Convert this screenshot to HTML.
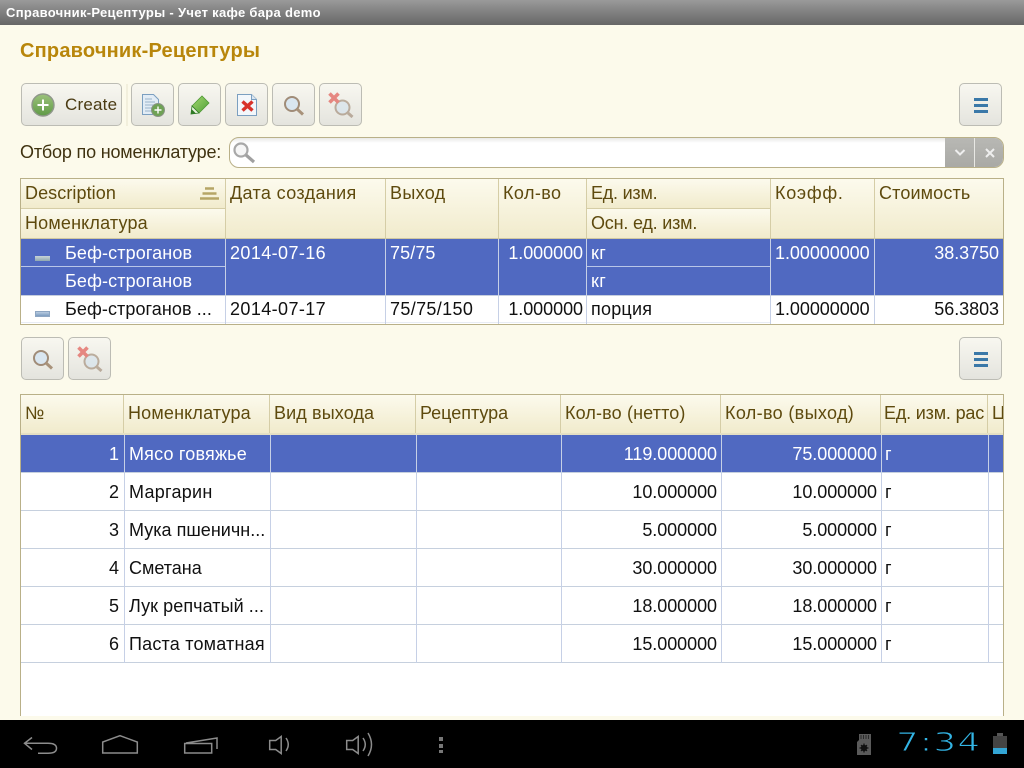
<!DOCTYPE html>
<html><head><meta charset="utf-8">
<style>
html,body{margin:0;padding:0;width:1024px;height:768px;overflow:hidden;background:#fcfaeb;font-family:"Liberation Sans",sans-serif}
div,span,svg{position:absolute;box-sizing:border-box}
.t{white-space:nowrap;font-size:18px;line-height:20px;letter-spacing:.12px;transform:translateY(-1px)}
.n{letter-spacing:-.05px}
.h{color:#5e4a0e}.w{color:#fff}.k{color:#111}
.r{text-align:right}
.hd{background:linear-gradient(#fcfaed,#f1ebcc)}
.v{width:1px}
.btn{width:43px;height:43px;border:1px solid #bcbcb4;border-radius:5px;background:linear-gradient(#f8f7f0,#e4e4de)}
</style></head><body>

<div style="left:0;top:0;width:1024px;height:25px;background:linear-gradient(#9a9a9a,#666)"></div>
<div class="t" style="left:6px;top:3px;color:#fff;font-weight:bold;font-size:13px;letter-spacing:.3px;transform:none">Справочник-Рецептуры - Учет кафе бара demo</div>
<div class="t" style="left:20px;top:39px;color:#b8860b;font-weight:bold;font-size:20px;line-height:24px;letter-spacing:.2px;transform:none">Справочник-Рецептуры</div>

<!-- toolbar -->
<div class="btn" style="left:21px;top:83px;width:101px"></div>
<div style="left:126px;top:84px;width:2px;height:42px;background:#f2efdc"></div>
<svg style="left:31px;top:93px" width="24" height="24" viewBox="0 0 24 24"><defs><linearGradient id="g1" x1="0" y1="0" x2="0" y2="1"><stop offset="0" stop-color="#9cc27c"/><stop offset="1" stop-color="#5f9a45"/></linearGradient><linearGradient id="g2" x1="0" y1="0" x2="1" y2="1"><stop offset="0" stop-color="#a4d86e"/><stop offset="1" stop-color="#4f9f38"/></linearGradient></defs><circle cx="12" cy="12" r="11" fill="url(#g1)" stroke="#8f978a" stroke-width="1.400"/><path d="M12 6.500v11M6.500 12h11" stroke="#fff" stroke-width="2"/></svg>
<div class="t" style="left:65px;top:95px;font-size:17px;color:#4a3a12;letter-spacing:.2px;transform:none">Create</div>
<div class="btn" style="left:131px;top:83px"></div>
<svg style="left:141px;top:93px" width="26" height="26" viewBox="0 0 26 26"><path d="M1.500 1.500h11l5 5v15h-16z" fill="#e2ecf5" stroke="#7b9fc0"/><path d="M4 6h7M4 9h10M4 12h10M4 15h8M4 18h7" stroke="#9bb5cc"/><circle cx="17" cy="17" r="6.500" fill="#6fa255" stroke="#8a9486"/><path d="M17 13.500v7M13.500 17h7" stroke="#fff" stroke-width="1.400"/></svg>
<div class="btn" style="left:178px;top:83px"></div>
<svg style="left:190px;top:95px" width="20" height="20" viewBox="0 0 20 20"><path d="M2 11L12 1l7 7L9 18z" fill="url(#g2)" stroke="#4f9a35" stroke-width=".8"/><path d="M1 19l1-8 7 7z" fill="#e8f2dc" stroke="#2f7a25" stroke-width=".8"/><path d="M1 19l.5-5 4.500 4.500z" fill="#2f7a25"/></svg>
<div class="btn" style="left:225px;top:83px"></div>
<svg style="left:236px;top:93px" width="22" height="24" viewBox="0 0 22 24"><path d="M1.500 1.500h14l5 5v16h-19z" fill="#f3f7fb" stroke="#7b9fc0"/><path d="M15.500 1.500v5h5" fill="#dbe6f0" stroke="#7b9fc0"/><path d="M6.500 8.500l10 9M16.500 8.500l-10 9" stroke="#d8322a" stroke-width="3.400"/></svg>
<div class="btn" style="left:272px;top:83px"></div>
<svg style="left:282px;top:93px" width="24" height="24" viewBox="0 0 24 24"><circle cx="10" cy="11" r="7" fill="#d9e6f0" stroke="#a08c78" stroke-width="2"/><path d="M15 16l6 5.500" stroke="#a8927a" stroke-width="3"/></svg>
<div class="btn" style="left:319px;top:83px"></div>
<svg style="left:328px;top:92px" width="26" height="26" viewBox="0 0 26 26" opacity=".65"><circle cx="14.500" cy="15.500" r="7" fill="#d5e3ee" stroke="#a08a76" stroke-width="2"/><path d="M20 21l4.500 4" stroke="#a08a76" stroke-width="3"/><path d="M1.500 1.500l9 9M10.500 1.500l-9 9" stroke="#e0504a" stroke-width="3.600"/></svg>
<div class="btn" style="left:959px;top:83px"></div>
<div style="left:974px;top:98px;width:14px;height:3px;background:#3a78a8"></div>
<div style="left:974px;top:104px;width:14px;height:3px;background:#3a78a8"></div>
<div style="left:974px;top:110px;width:14px;height:3px;background:#3a78a8"></div>

<!-- filter -->
<div class="t" style="left:20px;top:143px;color:#3f3210;letter-spacing:-.18px">Отбор по номенклатуре:</div>
<div style="left:229px;top:137px;width:775px;height:31px;border:1px solid #b9b088;border-radius:10px;background:linear-gradient(#e9e9e6 0,#fff 5px);overflow:hidden">
<div style="left:715px;top:0;width:59px;height:29px;background:linear-gradient(#b8b8b4,#a9a9a5)"></div>
<div style="left:744px;top:0;width:1px;height:29px;background:#e8e8e4"></div>
<svg style="left:722px;top:9px" width="16" height="12" viewBox="0 0 16 12"><path d="M3.500 3l4.500 4.500L12.500 3" fill="none" stroke="#eee" stroke-width="2"/></svg>
<svg style="left:754px;top:9px" width="12" height="12" viewBox="0 0 12 12"><path d="M2 2l8 8M10 2l-8 8" stroke="#eee" stroke-width="2"/></svg>
</div>
<svg style="left:233px;top:140px" width="24" height="24" viewBox="0 0 24 24"><circle cx="8" cy="10" r="6.500" fill="#f6f6f6" stroke="#a8a8a8" stroke-width="2.200"/><path d="M13 15l8 7" stroke="#a0a0a0" stroke-width="3.200"/></svg>

<!-- top table -->
<div style="left:20px;top:178px;width:984px;height:147px;border:1px solid #b9b088;background:#fff"></div>
<div class="hd" style="left:21px;top:179px;width:982px;height:59px"></div>
<div class="hd" style="left:21px;top:179px;width:204px;height:30px;border-bottom:1px solid #d5cda6"></div>
<div class="hd" style="left:21px;top:209px;width:204px;height:29px"></div>
<div class="hd" style="left:587px;top:179px;width:183px;height:30px;border-bottom:1px solid #d5cda6"></div>
<div class="hd" style="left:587px;top:209px;width:183px;height:29px"></div>
<div style="left:21px;top:238px;width:982px;height:1px;background:#cfc8a2"></div>
<div style="left:21px;top:239px;width:982px;height:56px;background:#5069c1"></div>
<div style="left:21px;top:266px;width:204px;height:1px;background:#b9c6e8"></div>
<div style="left:587px;top:266px;width:183px;height:1px;background:#b9c6e8"></div>
<div style="left:21px;top:295px;width:982px;height:1px;background:#c6cede"></div>
<div style="left:21px;top:322px;width:749px;height:1px;background:#e8ecf4"></div>
<div class="v" style="left:225px;top:179px;height:59px;background:#d5cda6"></div>
<div class="v" style="left:385px;top:179px;height:59px;background:#d5cda6"></div>
<div class="v" style="left:498px;top:179px;height:59px;background:#d5cda6"></div>
<div class="v" style="left:586px;top:179px;height:59px;background:#d5cda6"></div>
<div class="v" style="left:770px;top:179px;height:59px;background:#d5cda6"></div>
<div class="v" style="left:874px;top:179px;height:59px;background:#d5cda6"></div>
<div class="v" style="left:225px;top:239px;height:85px;background:#c6d0e6"></div>
<div class="v" style="left:385px;top:239px;height:85px;background:#c6d0e6"></div>
<div class="v" style="left:498px;top:239px;height:85px;background:#c6d0e6"></div>
<div class="v" style="left:586px;top:239px;height:85px;background:#c6d0e6"></div>
<div class="v" style="left:770px;top:239px;height:85px;background:#c6d0e6"></div>
<div class="v" style="left:874px;top:239px;height:85px;background:#c6d0e6"></div>

<div class="t h" style="left:25px;top:184px;letter-spacing:.08px">Description</div>
<svg style="left:200px;top:187px" width="19" height="13" viewBox="0 0 19 13"><path d="M5 1.500h9M2.500 6.500h14M0 11.500h19" stroke="#b5a566" stroke-width="2.600"/></svg>
<div class="t h" style="left:25px;top:214px;letter-spacing:.17px">Номенклатура</div>
<div class="t h" style="left:230px;top:184px;letter-spacing:.36px">Дата создания</div>
<div class="t h" style="left:390px;top:184px;letter-spacing:.32px">Выход</div>
<div class="t h" style="left:503px;top:184px;letter-spacing:.42px">Кол-во</div>
<div class="t h" style="left:591px;top:184px;letter-spacing:-.23px">Ед. изм.</div>
<div class="t h" style="left:591px;top:214px;letter-spacing:-.2px">Осн. ед. изм.</div>
<div class="t h" style="left:775px;top:184px;letter-spacing:.72px">Коэфф.</div>
<div class="t h" style="left:879px;top:184px;letter-spacing:.14px">Стоимость</div>

<div style="left:35px;top:256px;width:15px;height:5px;background:linear-gradient(#c8d4d8,#8fa8b0)"></div>
<div class="t w" style="left:65px;top:244px">Беф-строганов</div>
<div class="t w" style="left:65px;top:272px">Беф-строганов</div>
<div class="t w" style="left:230px;top:244px;letter-spacing:.4px">2014-07-16</div>
<div class="t w" style="left:390px;top:244px;letter-spacing:.1px">75/75</div>
<div class="t w r n" style="left:499px;width:84px;top:244px">1.000000</div>
<div class="t w" style="left:591px;top:244px;letter-spacing:.42px">кг</div>
<div class="t w" style="left:591px;top:272px;letter-spacing:.42px">кг</div>
<div class="t w n" style="left:775px;top:244px">1.00000000</div>
<div class="t w r n" style="left:875px;width:124px;top:244px">38.3750</div>

<div style="left:35px;top:311px;width:15px;height:6px;background:linear-gradient(#b8cbe0,#7d9cc0);border:1px solid #8ea6c2"></div>
<div class="t k" style="left:65px;top:300px;letter-spacing:.08px">Беф-строганов ...</div>
<div class="t k" style="left:230px;top:300px;letter-spacing:.4px">2014-07-17</div>
<div class="t k" style="left:390px;top:300px;letter-spacing:.35px">75/75/150</div>
<div class="t k r n" style="left:499px;width:84px;top:300px">1.000000</div>
<div class="t k" style="left:591px;top:300px;letter-spacing:.22px">порция</div>
<div class="t k n" style="left:775px;top:300px">1.00000000</div>
<div class="t k r n" style="left:875px;width:124px;top:300px">56.3803</div>

<!-- second toolbar -->
<div class="btn" style="left:21px;top:337px"></div>
<svg style="left:31px;top:347px" width="24" height="24" viewBox="0 0 24 24"><circle cx="10" cy="11" r="7" fill="#d9e6f0" stroke="#a08c78" stroke-width="2"/><path d="M15 16l6 5.500" stroke="#a8927a" stroke-width="3"/></svg>
<div class="btn" style="left:68px;top:337px"></div>
<svg style="left:77px;top:346px" width="26" height="26" viewBox="0 0 26 26" opacity=".65"><circle cx="14.500" cy="15.500" r="7" fill="#d5e3ee" stroke="#a08a76" stroke-width="2"/><path d="M20 21l4.500 4" stroke="#a08a76" stroke-width="3"/><path d="M1.500 1.500l9 9M10.500 1.500l-9 9" stroke="#e0504a" stroke-width="3.600"/></svg>
<div class="btn" style="left:959px;top:337px"></div>
<div style="left:974px;top:352px;width:14px;height:3px;background:#3a78a8"></div>
<div style="left:974px;top:358px;width:14px;height:3px;background:#3a78a8"></div>
<div style="left:974px;top:364px;width:14px;height:3px;background:#3a78a8"></div>

<!-- bottom table -->
<div style="left:20px;top:394px;width:984px;height:322px;border:1px solid #b9b088;border-bottom:0;background:#fff"></div>
<div class="hd" style="left:21px;top:395px;width:982px;height:38px"></div>
<div style="left:21px;top:433px;width:982px;height:2px;background:#e4dfc4"></div>
<div style="left:21px;top:435px;width:982px;height:37px;background:#5069c1"></div>
<div style="left:21px;top:472px;width:982px;height:1px;background:#c6d0de"></div>
<div style="left:21px;top:510px;width:982px;height:1px;background:#c6d0de"></div>
<div style="left:21px;top:548px;width:982px;height:1px;background:#c6d0de"></div>
<div style="left:21px;top:586px;width:982px;height:1px;background:#c6d0de"></div>
<div style="left:21px;top:624px;width:982px;height:1px;background:#c6d0de"></div>
<div style="left:21px;top:662px;width:982px;height:1px;background:#c6d0de"></div>

<div class="v" style="left:123px;top:395px;height:38px;background:#d5cda6"></div>
<div class="v" style="left:269px;top:395px;height:38px;background:#d5cda6"></div>
<div class="v" style="left:415px;top:395px;height:38px;background:#d5cda6"></div>
<div class="v" style="left:560px;top:395px;height:38px;background:#d5cda6"></div>
<div class="v" style="left:720px;top:395px;height:38px;background:#d5cda6"></div>
<div class="v" style="left:880px;top:395px;height:38px;background:#d5cda6"></div>
<div class="v" style="left:987px;top:395px;height:38px;background:#d5cda6"></div>

<div class="v" style="left:124px;top:435px;height:228px;background:#c6d0e6"></div>
<div class="v" style="left:270px;top:435px;height:228px;background:#c6d0e6"></div>
<div class="v" style="left:416px;top:435px;height:228px;background:#c6d0e6"></div>
<div class="v" style="left:561px;top:435px;height:228px;background:#c6d0e6"></div>
<div class="v" style="left:721px;top:435px;height:228px;background:#c6d0e6"></div>
<div class="v" style="left:881px;top:435px;height:228px;background:#c6d0e6"></div>
<div class="v" style="left:988px;top:435px;height:228px;background:#c6d0e6"></div>

<div class="t h" style="left:25px;top:404px">№</div>
<div class="t h" style="left:128px;top:404px;letter-spacing:.17px">Номенклатура</div>
<div class="t h" style="left:274px;top:404px;letter-spacing:.12px">Вид выхода</div>
<div class="t h" style="left:420px;top:404px;letter-spacing:-.03px">Рецептура</div>
<div class="t h" style="left:565px;top:404px;letter-spacing:.14px">Кол-во (нетто)</div>
<div class="t h" style="left:725px;top:404px;letter-spacing:.34px">Кол-во (выход)</div>
<div class="t h" style="left:884px;top:404px;width:103px;overflow:hidden;letter-spacing:-.18px">Ед. изм. рас</div>
<div class="t h" style="left:992px;top:404px;width:11px;overflow:hidden">Ц</div>

<div class="t w r n" style="left:21px;width:98px;top:445px">1</div>
<div class="t w" style="left:129px;top:445px;letter-spacing:.19px">Мясо говяжье</div>
<div class="t w r n" style="left:562px;width:155px;top:445px">119.000000</div>
<div class="t w r n" style="left:722px;width:155px;top:445px">75.000000</div>
<div class="t w" style="left:885px;top:445px">г</div>

<div class="t k r n" style="left:21px;width:98px;top:483px">2</div>
<div class="t k" style="left:129px;top:483px;letter-spacing:.27px">Маргарин</div>
<div class="t k r n" style="left:562px;width:155px;top:483px">10.000000</div>
<div class="t k r n" style="left:722px;width:155px;top:483px">10.000000</div>
<div class="t k" style="left:885px;top:483px">г</div>

<div class="t k r n" style="left:21px;width:98px;top:521px">3</div>
<div class="t k" style="left:129px;top:521px;letter-spacing:.02px">Мука пшеничн...</div>
<div class="t k r n" style="left:562px;width:155px;top:521px">5.000000</div>
<div class="t k r n" style="left:722px;width:155px;top:521px">5.000000</div>
<div class="t k" style="left:885px;top:521px">г</div>

<div class="t k r n" style="left:21px;width:98px;top:559px">4</div>
<div class="t k" style="left:129px;top:559px;letter-spacing:-.01px">Сметана</div>
<div class="t k r n" style="left:562px;width:155px;top:559px">30.000000</div>
<div class="t k r n" style="left:722px;width:155px;top:559px">30.000000</div>
<div class="t k" style="left:885px;top:559px">г</div>

<div class="t k r n" style="left:21px;width:98px;top:597px">5</div>
<div class="t k" style="left:129px;top:597px;letter-spacing:.07px">Лук репчатый ...</div>
<div class="t k r n" style="left:562px;width:155px;top:597px">18.000000</div>
<div class="t k r n" style="left:722px;width:155px;top:597px">18.000000</div>
<div class="t k" style="left:885px;top:597px">г</div>

<div class="t k r n" style="left:21px;width:98px;top:635px">6</div>
<div class="t k" style="left:129px;top:635px;letter-spacing:.2px">Паста томатная</div>
<div class="t k r n" style="left:562px;width:155px;top:635px">15.000000</div>
<div class="t k r n" style="left:722px;width:155px;top:635px">15.000000</div>
<div class="t k" style="left:885px;top:635px">г</div>

<!-- nav bar -->
<div style="left:0;top:720px;width:1024px;height:48px;background:#000"></div>
<svg style="left:0;top:720px" width="1024" height="48" viewBox="0 0 1024 48" fill="none" stroke="#8c8c8c" stroke-width="1.500">
<path d="M32 17.500l-7.500 5.800 7.500 6.200M25 23.300h23q8.500 0 8.500 5t-8.500 5H38"/>
<path d="M102.700 33V22L120 15.700 137.300 22v11z"/>
<path d="M184.700 23.500h27v9.500h-27zM186 23l31-5v11"/>
<path d="M269.700 20.500h6l5.500-4v17l-5.500-4h-6zM286 18q4.500 6.500 0 13"/>
<path d="M346.700 20.500h6l5.500-4v17l-5.500-4h-6zM363 18q4.500 6.500 0 13M368 13q7 11.500 0 23"/>
<path d="M441 17v4M441 24v4M441 30v3" stroke-width="4" stroke="#777"/>
</svg>
<svg style="left:857px;top:734px" width="14" height="21" viewBox="0 0 14 21"><path d="M2 0h12v21H0V8l2-2z" fill="#5a5a5a"/><path d="M4 1v4M6.500 1v4M9 1v4M11.500 1v4" stroke="#2a2a2a"/><circle cx="7" cy="14" r="3.200" fill="#111"/><path d="M7 9.500v9M2.500 14h9M4 11l6 6M10 11l-6 6" stroke="#111" stroke-width="1.200"/></svg>
<div style="left:896px;top:726px;font-size:26px;line-height:34px;color:#33b5e5;font-family:'DejaVu Sans',sans-serif;letter-spacing:1px;white-space:nowrap;transform-origin:0 50%;transform:scaleX(1.37);-webkit-text-stroke:.9px #000">7:34</div>
<div style="left:997px;top:733px;width:6px;height:3px;background:#555"></div>
<div style="left:993px;top:736px;width:14px;height:12px;background:#444"></div>
<div style="left:993px;top:748px;width:14px;height:6px;background:#33a5d5"></div>

</body></html>
